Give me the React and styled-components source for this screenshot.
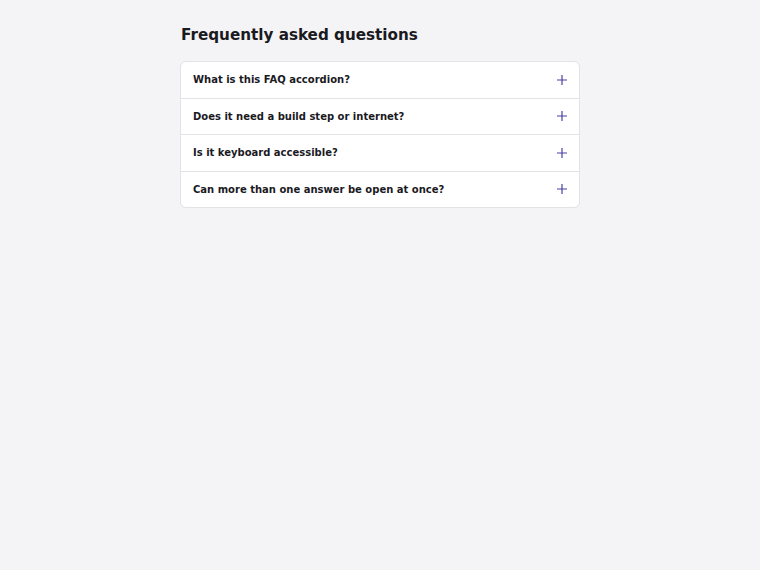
import React from "react";
import styled, { createGlobalStyle } from "styled-components";

const Global = createGlobalStyle`
  html, body { margin: 0; padding: 0; background: #f4f4f6; }
  body { font-family: "DejaVu Sans", sans-serif; color: #1a1a1f; }
`;

const Page = styled.main`
  max-width: 400px;
  margin: 0 auto;
  padding: 24px 0;
`;

const Title = styled.h1`
  font-size: 15.2px;
  font-weight: 700;
  margin: 0 0 15px 1px;
  line-height: 22px;
`;

const List = styled.div`
  background: #fff;
  border: 1px solid #e2e2e7;
  border-radius: 6px;
  overflow: hidden;
`;

const Item = styled.div`
  & + & { border-top: 1px solid #e2e2e7; }
`;

const Question = styled.button`
  display: flex;
  align-items: center;
  justify-content: space-between;
  width: 100%;
  border: 0;
  background: transparent;
  padding: 12px 12px;
  font-family: inherit;
  font-size: 10px;
  line-height: 11.5px;
  font-weight: 700;
  color: #1a1a1f;
  text-align: left;
  cursor: pointer;
`;

const Plus = () => (
  <svg width="10" height="10" viewBox="0 0 10 10" aria-hidden="true">
    <path d="M5 0v10M0 5h10" stroke="#4a40a6" strokeWidth="1.2" fill="none" />
  </svg>
);

const questions = [
  "What is this FAQ accordion?",
  "Does it need a build step or internet?",
  "Is it keyboard accessible?",
  "Can more than one answer be open at once?",
];

export default function App() {
  return (
    <>
      <Global />
      <Page>
        <Title>Frequently asked questions</Title>
        <List>
          {questions.map((q) => (
            <Item key={q}>
              <Question type="button" aria-expanded="false">
                <span>{q}</span>
                <Plus />
              </Question>
            </Item>
          ))}
        </List>
      </Page>
    </>
  );
}
